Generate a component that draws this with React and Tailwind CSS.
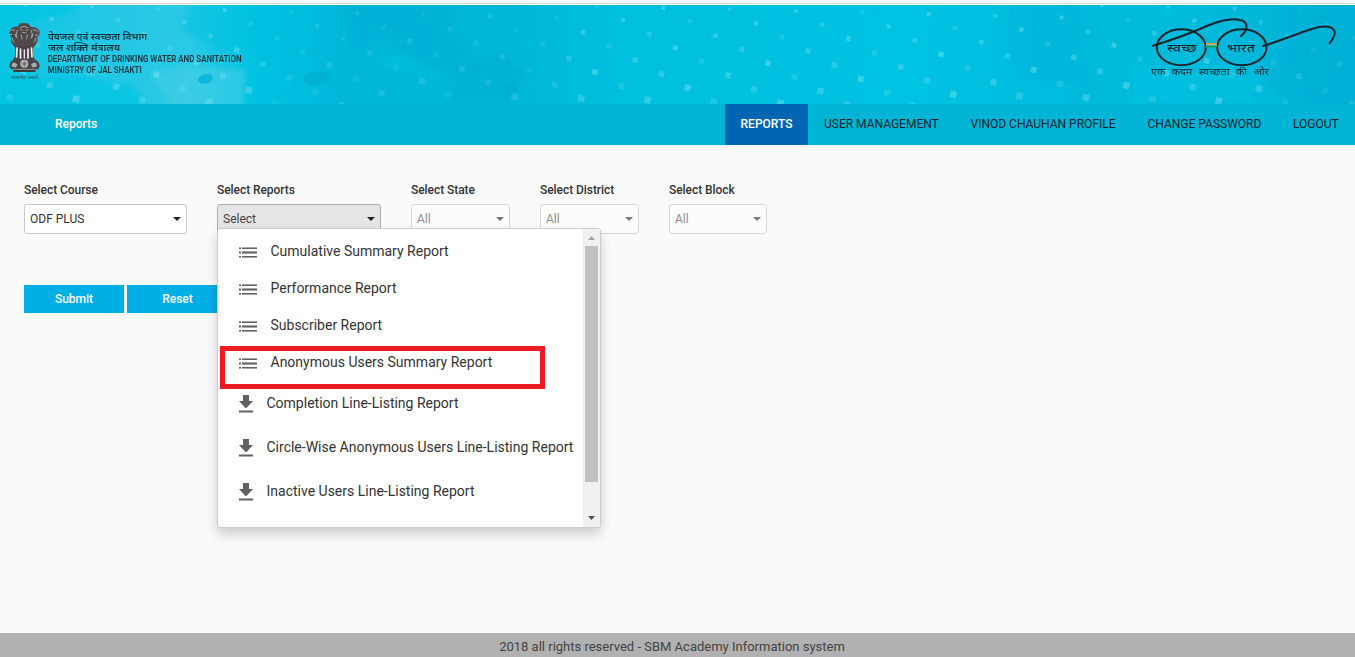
import React from "react";

const SQUARES = [];
for (let j = -2; j < 10; j++) {
  for (let i = -16; i < 13; i++) {
    const x = 729.6 + i * 66.4 + j * 26.2;
    const y = 9.3 + i * 1.65 + j * 13.9 - 5;
    if (x > -10 && x < 1365 && y > -6 && y < 104) {
      const shade = [0.2, 0.28, 0.14, 0.24][(((i * 3 + j * 5) % 4) + 4) % 4];
      const dark = (x > 270 && x < 560) || x > 1270;
      SQUARES.push({ x, y, s: 3.6 + y * 0.033, o: dark ? shade * 0.5 : shade });
    }
  }
}

function HeaderPattern() {
  return (
    <svg className="absolute inset-0" width="1355" height="99" viewBox="0 0 1355 99">
      <defs>
        <linearGradient id="water">
          <stop offset="0" stopColor="#0bc5e3" />
          <stop offset="0.07" stopColor="#22c8e4" />
          <stop offset="0.14" stopColor="#2ac9e5" />
          <stop offset="0.19" stopColor="#00c2e2" />
          <stop offset="0.25" stopColor="#00b7da" />
          <stop offset="0.37" stopColor="#00b6d9" />
          <stop offset="0.46" stopColor="#00bfdf" />
          <stop offset="0.68" stopColor="#00c2e2" />
          <stop offset="0.8" stopColor="#00badc" />
          <stop offset="0.87" stopColor="#00bbdc" />
          <stop offset="1" stopColor="#00b0d5" />
        </linearGradient>
        <filter id="soft" x="-20%" y="-20%" width="140%" height="140%">
          <feGaussianBlur stdDeviation="2.5" />
        </filter>
      </defs>
      <rect width="1355" height="99" fill="url(#water)" />
      <g filter="url(#soft)">
        <path d="M0 0h80l-12 9-30 4-20 14-25-4zM0 68l32 6 40-5 60 12 20 25H0z" fill="#00c3e3" opacity=".7" />
        <path d="M190 0h75l15 20-22 35-45-13-33-19z" fill="#00bfe0" opacity=".5" />
        <path d="M150 68l44-8 52 5-3 40h-69z" fill="#4bcfe8" opacity=".5" />
        <path d="M345 0h112l-6 25 17 20-10 29-42-11-26-30-38 9zM462 61l43-14 21 23-15 29h-65z" fill="#00aed4" opacity=".5" />
        <path d="M371 57l32-9 23 11-15 9zM403 67l28-4 20 6-20 7z" fill="#08bdde" opacity=".7" />
        <path d="M1010 0h65l14 28-17 19 22 30-75-3-15-40zM1290 0h65v99h-45l-20-40z" fill="#00aed4" opacity=".22" />
        <path d="M1130 60l60 5 55-8 40 42h-155z" fill="#00c4e3" opacity=".45" />
      </g>
      <ellipse cx="316.500" cy="73.500" rx="13.500" ry="7" fill="#00a9cf" opacity=".65" transform="rotate(-4 316 73)" />
      <ellipse cx="205.500" cy="74" rx="7.500" ry="4.800" fill="#00b3d8" opacity=".8" transform="rotate(-12 205 74)" />
      <path d="M244 85l8-2 6 6-4 8-9-1z" transform="translate(260 -6)" fill="#00a9cf" opacity=".5" />
      {SQUARES.map((q, k) => (
        <rect key={k} x={q.x - q.s / 2} y={q.y - q.s / 2} width={q.s} height={q.s} fill="#a8eef6" opacity={q.o * 1.15} transform={`rotate(14 ${q.x} ${q.y})`} />
      ))}
    </svg>
  );
}

function Emblem() {
  return (
    <svg className="mt-[17px] ml-[5px] shrink-0 overflow-visible" width="37" height="59" viewBox="6 22 37 59">
      <path d="M20 24.500q1-1.500 5-1.500t5 1.500l2 2.500q6-.5 8.500 4 1 4-2 6 .5 5-2 8l-2 2.500-1.500 6-15 .5-1.500-6-2.500-3q-2.500-3-2-8-2.500-3-1.500-6 2-5 8.500-4.500z" fill="#51484a" />
      <path d="M16.500 46h17.500l0 9 2.500 7-5 1H18l-4.500-1 2.500-7z" fill="#4a4345" />
      <g fill="none" stroke="#a3aeb2" strokeWidth=".9" strokeLinecap="round">
        <path d="M21 27.500q4-2.500 8 0M21.500 30h2m3.500 0h2M23.500 32.500q1.500 1 3.500 0M10.500 31q2-2 5-1M34 30q3-1 5 1.500M10 34.500h3M36.500 35h2.500M18.500 30q-2.500 4-.5 8M32 30q2.500 4 .5 8M13 38l1.500 4M37 38l-1.500 4M22 35l1 4M28.500 35l-1 4M16 34l1 3M34 34l-1 3" />
      </g>
      <g fill="none" stroke="#eef2f2" strokeLinecap="round">
        <path d="M18 48l-.5 9M21.500 49l0 9M29 49l0 9M32.500 48l.5 9" strokeWidth="1.700" />
        <path d="M25.300 50v8" strokeWidth="1.300" />
      </g>
      <path d="M16 59h18.500q5 1.500 6 6 .5 3-2.500 4.500H13Q10 68 10.500 65q1-4.500 5.500-6z" fill="#4b4446" />
      <path d="M14 69.500h22.500v2.500H14z" fill="#3f3a3b" />
      <circle cx="25.300" cy="63.800" r="4" fill="#b8c0c2" />
      <path d="M25.300 60.500v6.600M22 63.800h6.600M23 61.500l4.600 4.600M27.600 61.500 23 66.100" stroke="#5e5658" strokeWidth=".7" />
      <path d="M12.500 66.500q0-4 3-4l3 2-1.500 3zM38 66.500q0-4-3-4l-3 2 1.500 3z" fill="#a4adb0" />
      <path d="M14 69.300h22.500" stroke="#aab3b5" strokeWidth=".7" />
      <text x="12" y="78.500" fontSize="5" textLength="27" lengthAdjust="spacingAndGlyphs" fill="#1d5260" fontFamily="'Noto Sans', 'Noto Sans Devanagari', sans-serif">सत्यमेव जयते</text>
    </svg>
  );
}

function SwachhLogo() {
  return (
    <svg className="mt-[10px] shrink-0" width="195" height="66" viewBox="1145 15 195 66">
      <g fill="none" stroke="#15242b" strokeWidth="2" strokeLinecap="round">
        <ellipse cx="1181.300" cy="47.300" rx="24.500" ry="18" />
        <ellipse cx="1241.800" cy="47.300" rx="24.700" ry="18" />
        <path d="M1153 45.700C1172 40 1189 34 1208 25.500C1222 20 1234 18.500 1240 20C1249 22 1248 30 1241 36" />
        <path d="M1263 46C1280 41 1296 34 1312 29C1325 25 1332 26 1334.500 31C1336 35 1333 39 1329.500 43.300" />
      </g>
      <path d="M1206 43h11v1.500h-11z" fill="#e8962a" />
      <path d="M1206 44.500h11v1h-11z" fill="#b5dccb" />
      <path d="M1206 45.500h11v2h-11z" fill="#1b9a58" />
      <g fill="#15242b" fontFamily="'Noto Sans', 'Noto Sans Devanagari', sans-serif">
        <text x="1167" y="51.500" fontSize="11" fontWeight="500" textLength="29.500" lengthAdjust="spacingAndGlyphs">स्वच्छ</text>
        <text x="1227" y="51.500" fontSize="11" fontWeight="500" textLength="28" lengthAdjust="spacingAndGlyphs">भारत</text>
        <text x="1151" y="75" fontSize="9" wordSpacing="3" textLength="118" lengthAdjust="spacingAndGlyphs">एक कदम स्वच्छता की ओर</text>
      </g>
    </svg>
  );
}

function HeaderText() {
  return (
    <svg className="mt-[24px] ml-[5px] shrink-0 overflow-visible" width="220" height="50" viewBox="47 29 220 50" fill="#12343f" fontWeight="600">
      <g fontFamily="'Noto Sans', 'Noto Sans Devanagari', sans-serif" fontSize="9.500">
        <text x="48" y="40" textLength="99" lengthAdjust="spacingAndGlyphs">पेयजल एवं स्वच्छता विभाग</text>
        <text x="48" y="51" textLength="72" lengthAdjust="spacingAndGlyphs">जल शक्ति मंत्रालय</text>
      </g>
      <g fontFamily="Roboto, sans-serif" fontSize="9">
        <text x="47.700" y="62" textLength="194" lengthAdjust="spacingAndGlyphs">DEPARTMENT OF DRINKING WATER AND SANITATION</text>
        <text x="47.700" y="73" textLength="94" lengthAdjust="spacingAndGlyphs">MINISTRY OF JAL SHAKTI</text>
      </g>
    </svg>
  );
}

function Field({ label, value, width, tone }) {
  const box = {
    normal: "bg-white border-[#c8c8c8] text-[#333]",
    open: "bg-[#e5e5e5] border-[#adadad] text-[#444]",
    disabled: "bg-[#fcfcfc] border-[#d8d8d8] text-[#8f8f8f]",
  }[tone];
  return (
    <div className={width}>
      <div className="h-[18px] text-[12px] leading-[18px] font-medium tracking-[-0.060px] text-[#333] whitespace-nowrap">{label}</div>
      <div className={`mt-[5px] flex h-[30px] items-center justify-between rounded-[3px] border pr-[5px] pl-[5px] text-[12px] ${box}`}>
        <span>{value}</span>
        <svg width="8" height="4" viewBox="0 0 8 4" className={tone === "disabled" ? "text-[#777]" : "text-[#222]"}>
          <path d="M0 0h8L4 4z" fill="currentColor" />
        </svg>
      </div>
    </div>
  );
}

function ListIcon() {
  return (
    <svg width="19" height="11" viewBox="0 0 19 11" shapeRendering="crispEdges">
      <path d="M1 0h2v1H1zM4 0h15v1H4zM1 4h2v3H1zM4 4h15v3H4zM1 10h2v1H1zM4 10h15v1H4z" fill="#a6a6a6" />
      <path d="M1 1h2v1H1zM4 1h15v1H4zM1 5h2v1H1zM4 5h15v1H4zM1 9h2v1H1zM4 9h15v1H4z" fill="#606060" />
    </svg>
  );
}

function DownloadIcon() {
  return (
    <svg width="14" height="18" viewBox="0 0 14 18">
      <path d="M4 0h6v6h4l-7 7.500L0 6h4zM0 15.500h14v2H0z" fill="#616161" />
    </svg>
  );
}

const LISTS = ["Cumulative Summary Report", "Performance Report", "Subscriber Report", "Anonymous Users Summary Report"];
const DOWNLOADS = ["Completion Line-Listing Report", "Circle-Wise Anonymous Users Line-Listing Report", "Inactive Users Line-Listing Report"];

function ReportMenu() {
  return (
    <div className="absolute top-[228px] left-[217px] flex h-[300px] w-[384px] overflow-visible rounded-[3px] border border-[#ccc] bg-white shadow-[0_6px_12px_rgba(0,0,0,0.18)]">
      <div className="flex-1 pl-[20px] pt-[4px] text-[14px] whitespace-nowrap text-[#333]">
        {LISTS.map((t) => (
          <div key={t} className="flex h-[37px] items-center">
            <span className="mt-[2px]"><ListIcon /></span>
            <span className="ml-[13.500px]">{t}</span>
          </div>
        ))}
        {DOWNLOADS.map((t) => (
          <div key={t} className="flex h-[44px] items-center">
            <span className="mt-[1px] ml-px"><DownloadIcon /></span>
            <span className="ml-[13.500px]">{t}</span>
          </div>
        ))}
      </div>
      <div className="flex w-[17px] flex-col items-center bg-[#f1f1f1]">
        <svg width="17" height="17" viewBox="0 0 17 17"><path d="M5 11h7L8.500 7z" fill="#a3a3a3" /></svg>
        <div className="h-[236px] w-[13px] bg-[#c1c1c1]" />
        <svg className="mt-auto" width="17" height="17" viewBox="0 0 17 17"><path d="M5 6h7L8.500 10z" fill="#505050" /></svg>
      </div>
      <div className="absolute top-[117px] left-[2px] h-[43px] w-[325px] border-5 border-[#ed1c24]" />
    </div>
  );
}

export default function App() {
  return (
    <div className="relative flex h-[657px] w-[1355px] flex-col overflow-hidden bg-[#fafafa] font-['Roboto',sans-serif]">
      <div className="h-[5px] shrink-0 bg-white pt-[3px]"><div className="h-px bg-[#d8d8d8]" /></div>
      <header className="relative h-[99px] shrink-0">
        <HeaderPattern />
        <div className="relative flex items-start">
          <Emblem />
          <HeaderText />
          <div className="mr-[15px] ml-auto"><SwachhLogo /></div>
        </div>
      </header>
      <nav className="flex h-[41px] shrink-0 items-stretch bg-[#00b4d6] text-[12px] leading-[40px] whitespace-nowrap text-[#08222b]">
        <div className="pl-[55px] font-medium text-white">Reports</div>
        <div className="ml-auto w-[83px] bg-[#0066b3] text-center font-medium text-white">REPORTS</div>
        <div className="w-[146px] pl-[16px]">USER MANAGEMENT</div>
        <div className="w-[177px] pl-[16.500px]">VINOD CHAUHAN PROFILE</div>
        <div className="w-[146px] pl-[16.500px]">CHANGE PASSWORD</div>
        <div className="w-[78px] pl-[16px]">LOGOUT</div>
      </nav>
      <main className="flex-1 px-[24px] pt-[36px]">
        <div className="flex">
          <Field label="Select Course" value="ODF PLUS" width="w-[163px]" tone="normal" />
          <div className="ml-[30px] flex gap-[30px]">
            <Field label="Select Reports" value="Select" width="w-[164px]" tone="open" />
            <Field label="Select State" value="All" width="w-[99px]" tone="disabled" />
            <Field label="Select District" value="All" width="w-[99px]" tone="disabled" />
            <Field label="Select Block" value="All" width="w-[98px]" tone="disabled" />
          </div>
        </div>
        <div className="mt-[51px] flex gap-[3px] text-center text-[12px] leading-[28px] font-medium text-white">
          <div className="h-[28px] w-[100px] bg-[#00aee6]">Submit</div>
          <div className="h-[28px] w-[101px] bg-[#00aee6]">Reset</div>
        </div>
      </main>
      <footer className="h-[24px] shrink-0 bg-[#b1b1b1] pr-[11px] text-center text-[13px] leading-[27px] text-[#444]">
        2018 all rights reserved - SBM Academy Information system
      </footer>
      <ReportMenu />
    </div>
  );
}
